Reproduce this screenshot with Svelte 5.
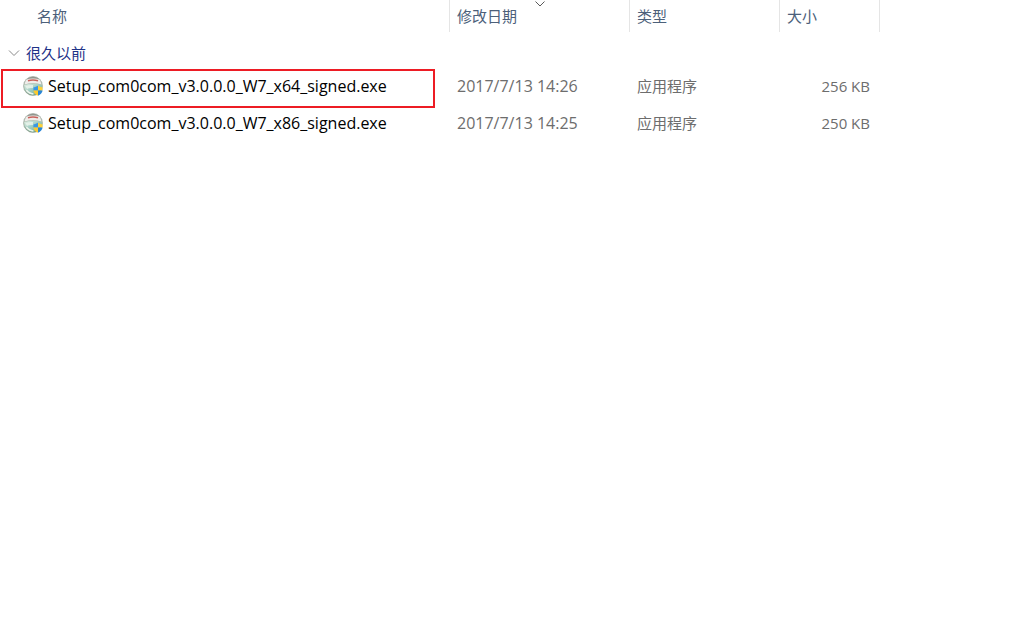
<script lang="ts">
    type FileItem = {
        name: string;
        modified: string;
        type: string;
        size: string;
        marked: boolean;
    };

    const files: FileItem[] = [
        {
            name: 'Setup_com0com_v3.0.0.0_W7_x64_signed.exe',
            modified: '2017/7/13 14:26',
            type: '应用程序',
            size: '256 KB',
            marked: true
        },
        {
            name: 'Setup_com0com_v3.0.0.0_W7_x86_signed.exe',
            modified: '2017/7/13 14:25',
            type: '应用程序',
            size: '250 KB',
            marked: false
        }
    ];

    let open = $state(true);
</script>

{#snippet setupIcon()}
    <svg class="file-icon" viewBox="0 0 20 20" aria-hidden="true">
        <defs>
            <linearGradient id="disc" x1="0" y1="0" x2="0" y2="1">
                <stop offset="0" stop-color="#8f8e88" />
                <stop offset="0.5" stop-color="#a9bfae" />
                <stop offset="1" stop-color="#6f8f74" />
            </linearGradient>
            <linearGradient id="face" x1="0" y1="0" x2="1" y2="1">
                <stop offset="0" stop-color="#e4f0e4" />
                <stop offset="0.5" stop-color="#9ccbc0" />
                <stop offset="1" stop-color="#6fae86" />
            </linearGradient>
        </defs>
        <circle cx="10" cy="10" r="9.5" fill="url(#disc)" stroke="#9ba79c" stroke-width="0.6" />
        <path d="M1.2 9Q10 6.4 18.8 9A9 9 0 0 1 10 18.8A9 9 0 0 1 1.2 9Z" fill="url(#face)" />
        <path d="M3 3.8Q10 1.4 17 3.8L18.6 8.4Q10 6 1.4 8.4Z" fill="#efedea" />
        <path d="M5 4.8Q10 3.4 15 4.8" fill="none" stroke="#c9625c" stroke-width="1.5" />
        <path d="M2.4 10Q6 8.6 10 9L10 12Q6 11.5 4 13Z" fill="#f0f7ef" opacity="0.75" />
        <path d="M3.4 14Q6 17.6 10.4 18" fill="none" stroke="#eef4ec" stroke-width="1.4" />
        <path d="M10.4 11.4Q13 11.2 15 9.8V14.6H10.4Z" fill="#3997e4" />
        <path d="M15 9.8Q17 11.2 19.6 11.4V14.6H15Z" fill="#fdd23c" />
        <path d="M10.4 14.6H15V19.8Q10.9 18 10.4 14.6Z" fill="#fdc92f" />
        <path d="M15 14.6H19.6Q19.1 18 15 19.8Z" fill="#2a86d6" />
    </svg>
{/snippet}

<main>
    <table>
        <colgroup>
            <col class="col-name" />
            <col class="col-date" />
            <col class="col-type" />
            <col class="col-size" />
            <col />
        </colgroup>
        <thead>
            <tr>
                <th class="first" scope="col">名称</th>
                <th scope="col" aria-sort="descending">
                    修改日期
                    <svg class="sort-mark" viewBox="0 0 10 6" aria-hidden="true">
                        <path d="M0.5 0.5L5 5L9.5 0.5" />
                    </svg>
                </th>
                <th scope="col">类型</th>
                <th scope="col">大小</th>
                <td></td>
            </tr>
        </thead>
        <tbody>
            <tr class="group">
                <td colspan="5">
                    <button type="button" aria-expanded={open} onclick={() => (open = !open)}>
                        <svg class="chevron" class:closed={!open} viewBox="0 0 12 8" aria-hidden="true">
                            <path d="M1 1.5L6 6.5L11 1.5" />
                        </svg>
                        很久以前
                    </button>
                </td>
            </tr>
            {#if open}
                {#each files as file (file.name)}
                    <tr class="file">
                        <td class="name" class:marked={file.marked}>
                            <div class="label">
                                {@render setupIcon()}
                                <span>{file.name}</span>
                            </div>
                        </td>
                        <td class="date">{file.modified}</td>
                        <td>{file.type}</td>
                        <td class="size">{file.size}</td>
                        <td></td>
                    </tr>
                {/each}
            {/if}
        </tbody>
    </table>
</main>

<style>
    :global(body) {
        background: #fff;
    }

    main {
        font-family: 'Open Sans', 'Noto Sans', 'Noto Sans CJK SC', sans-serif;
        font-size: 15px;
        line-height: 20px;
        color: #6d6d6d;
    }

    table {
        width: 100%;
        table-layout: fixed;
        border-collapse: separate;
        border-spacing: 0;
    }

    .col-name {
        width: 450px;
    }

    .col-date {
        width: 180px;
    }

    .col-type {
        width: 150px;
    }

    .col-size {
        width: 100px;
    }

    th,
    td {
        box-sizing: border-box;
        padding: 0 7px;
        text-align: left;
        white-space: nowrap;
    }

    th {
        position: relative;
        height: 32px;
        border-right: 1px solid #e5e5e5;
        font-weight: 400;
        color: #4c607a;
    }

    th.first {
        padding-left: 37px;
    }

    .sort-mark {
        position: absolute;
        top: 1px;
        left: 50%;
        width: 10px;
        height: 6px;
        margin-left: -5px;
        fill: none;
        stroke: #5a5a5a;
    }

    .group td {
        height: 36px;
        padding: 6px 8px 0;
    }

    button {
        display: flex;
        align-items: center;
        gap: 6px;
        padding: 0;
        border: none;
        background: none;
        font: inherit;
        color: #1e3287;
        cursor: default;
    }

    .chevron {
        width: 12px;
        height: 8px;
        fill: none;
        stroke: #8a8a8a;
    }

    .chevron.closed {
        transform: rotate(-90deg);
    }

    .file td {
        height: 37px;
        padding-bottom: 2px;
    }

    .file .name {
        position: relative;
        padding-left: 23px;
        color: #000;
    }

    .file .name,
    .file .date {
        font-size: 16px;
    }

    .label {
        display: flex;
        align-items: center;
        gap: 5px;
    }

    .file-icon {
        flex: none;
        width: 20px;
        height: 20px;
    }

    .marked::after {
        content: '';
        position: absolute;
        inset: 1px 15px -3px 1px;
        border: 2px solid #ed1c24;
        pointer-events: none;
    }

    .file .size {
        padding-right: 10px;
        text-align: right;
    }
</style>
